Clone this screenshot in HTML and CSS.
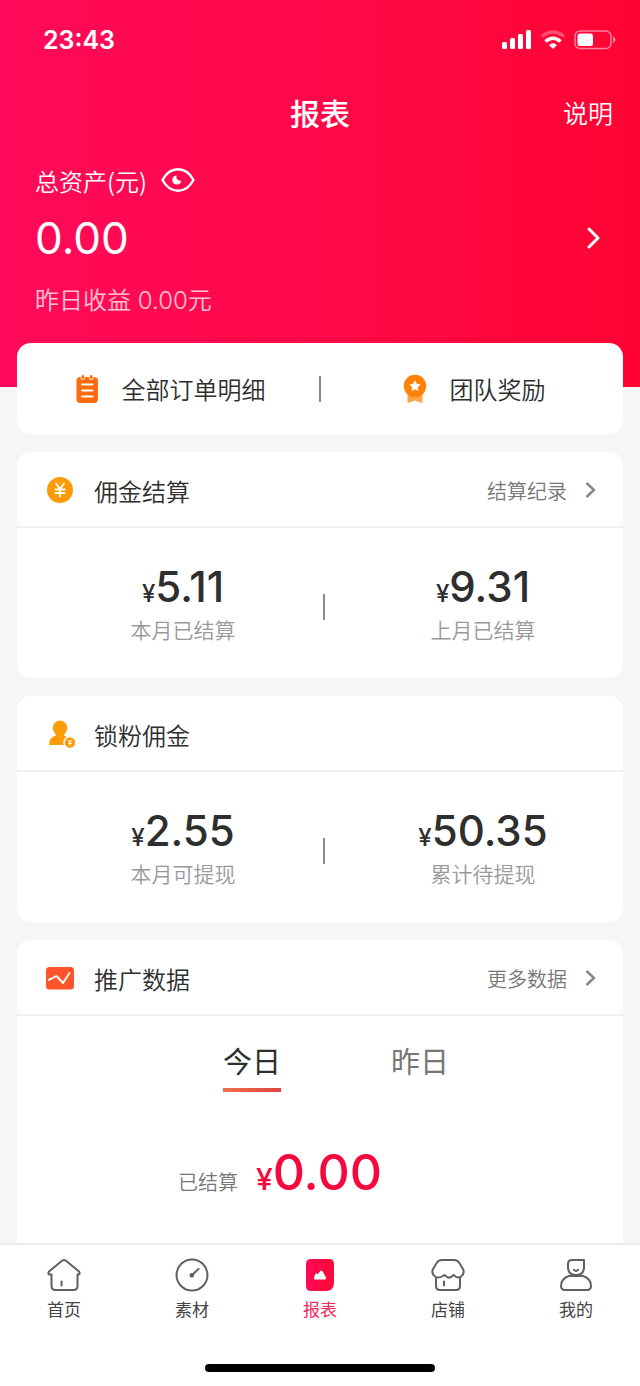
FILE: index.html
```html
<!DOCTYPE html>
<html lang="zh-CN">
<head>
<meta charset="utf-8">
<meta name="viewport" content="width=device-width, initial-scale=1">
<title>报表</title>
<link rel="stylesheet" href="styles.css">
</head>
<body>
<div class="app">
  <header class="hero">
    <div class="status">
      <time class="clock">23:43</time>
      <div class="status-icons">
        <svg width="30" height="20" viewBox="0 0 30 20" fill="#fff" aria-hidden="true"><rect x="0" y="12" width="5" height="7" rx="1.5"/><rect x="8" y="8" width="5" height="11" rx="1.5"/><rect x="16" y="4" width="5" height="15" rx="1.5"/><rect x="24" y="0" width="5" height="19" rx="1.5"/></svg>
        <svg width="24" height="20" viewBox="0 0 24 20" fill="none" stroke="#fff" aria-hidden="true"><path d="M1 6.500Q12-2.500 23 6.500" stroke-width="3.200" opacity=".3"/><path d="M4.500 11.500Q12 5 19.500 11.500" stroke-width="3.600"/><path d="M8 15Q12 11.500 16 15L12 19Z" fill="#fff" stroke="none"/></svg>
        <svg width="42" height="20" viewBox="0 0 42 20" fill="none" aria-hidden="true"><rect x="1" y="1" width="36" height="17.500" rx="5" stroke="#fff" stroke-width="1.500" opacity=".5"/><rect x="3.500" y="3.500" width="15.500" height="12.500" rx="2.500" fill="#fff"/><path d="M39 6.500Q41.500 7.500 41.500 9.700T39 13Z" fill="#fff" opacity=".5"/></svg>
      </div>
    </div>
    <div class="titlebar">
      <h1 class="title">报表</h1>
      <a class="help" href="#help">说明</a>
    </div>
    <div class="assets">
      <div class="assets-label">
        <span>总资产(元)</span>
        <button class="eye" type="button" aria-label="隐藏金额">
          <svg width="34" height="26" viewBox="0 0 34 26" fill="none" aria-hidden="true"><path d="M1.500 13C5 6.500 10 2.300 17 2.300S29 6.500 32.500 13C29 19.500 24 23.700 17 23.700S5 19.500 1.500 13Z" stroke="#fff" stroke-width="2.400" stroke-linejoin="round"/><path d="M15.500 8.500A4.500 4.500 0 1 0 20.300 13.500A4 4 0 0 1 15.500 8.500Z" fill="#fff"/></svg>
        </button>
      </div>
      <a class="assets-total" href="#assets">
        <span>0.00</span>
        <svg width="14" height="22" viewBox="0 0 14 22" fill="none" stroke="#fff" stroke-width="3" stroke-linecap="round" stroke-linejoin="round" aria-hidden="true"><path d="M2 2L11 11L2 20"/></svg>
      </a>
      <p class="assets-note">昨日收益 <span class="latin">0.00</span>元</p>
    </div>
  </header>

  <main class="content">
    <nav class="card quick" aria-label="快捷入口">
      <a class="quick-link" href="#orders">
        <svg width="24" height="30" viewBox="0 0 24 30" aria-hidden="true"><rect x="1.500" y="3" width="21.500" height="26" rx="4" fill="#ff6a0d"/><g fill="#ff6a0d" stroke="#fff" stroke-width="1"><rect x="6" y="0.500" width="3.500" height="5" rx="1.700"/><rect x="14.500" y="0.500" width="3.500" height="5" rx="1.700"/></g><path d="M7 10.500h10.500M7 16.500h10.500M7 22.500h10.500" stroke="#fff" stroke-width="2" stroke-linecap="round"/></svg>
        <span>全部订单明细</span>
      </a>
      <span class="divider"></span>
      <a class="quick-link" href="#rewards">
        <svg width="24" height="30" viewBox="0 0 24 30" aria-hidden="true"><path d="M4.500 18H19.500V29L12 26.500L4.500 29Z" fill="#ffa24a"/><circle cx="12" cy="12" r="11.200" fill="#ff8208"/><path d="M12 6.500l1.800 3.300 3.700.7-2.600 2.700.5 3.700L12 15.300l-3.400 1.600.5-3.700-2.600-2.700 3.700-.7Z" fill="#fff"/></svg>
        <span>团队奖励</span>
      </a>
    </nav>

    <section class="card">
      <div class="card-head">
        <svg class="card-icon" width="30" height="30" viewBox="0 0 30 30" aria-hidden="true"><circle cx="15" cy="15" r="13" fill="#ff9b08"/><path d="M11 8.500L15 14L19 8.500M15 14V21.500M10.500 14.500H19.500M10.500 18H19.500" fill="none" stroke="#fff" stroke-width="1.800" stroke-linecap="round"/></svg>
        <h2 class="card-title">佣金结算</h2>
        <a class="more" href="#records">结算纪录
          <svg width="11" height="16" viewBox="0 0 11 16" fill="none" stroke="#858585" stroke-width="2.400" aria-hidden="true"><path d="M1.500 1L9 8L1.500 15"/></svg>
        </a>
      </div>
      <div class="stats">
        <div class="stat"><p class="amount"><span class="yen">¥</span>5.11</p><p class="stat-label">本月已结算</p></div>
        <span class="divider"></span>
        <div class="stat"><p class="amount"><span class="yen">¥</span>9.31</p><p class="stat-label">上月已结算</p></div>
      </div>
    </section>

    <section class="card">
      <div class="card-head">
        <svg class="card-icon" width="30" height="30" viewBox="0 0 30 30" aria-hidden="true"><g fill="#ff9b08"><ellipse cx="15" cy="9" rx="7.300" ry="7.500"/><path d="M10 13H20L19 16.500Q26 19 26.500 26H4Q4 18 11 16.500Z"/><circle cx="25" cy="23.500" r="6" stroke="#fff" stroke-width="1.500"/></g><path d="M23.200 21L25 23.300L26.800 21M25 23.300V26.500M23.300 24.500H26.700" fill="none" stroke="#fff" stroke-width="1.100"/></svg>
        <h2 class="card-title">锁粉佣金</h2>
      </div>
      <div class="stats">
        <div class="stat"><p class="amount"><span class="yen">¥</span>2.55</p><p class="stat-label">本月可提现</p></div>
        <span class="divider"></span>
        <div class="stat"><p class="amount"><span class="yen">¥</span>50.35</p><p class="stat-label">累计待提现</p></div>
      </div>
    </section>

    <section class="card card-last">
      <div class="card-head">
        <svg class="card-icon" width="30" height="30" viewBox="0 0 30 30" aria-hidden="true"><rect x="1" y="4" width="28" height="22.500" rx="3.500" fill="#ff532b"/><path d="M3.800 16.800L11.500 13L18 20L24.500 10" fill="none" stroke="#fff" stroke-width="1.900" stroke-linecap="round" stroke-linejoin="round"/></svg>
        <h2 class="card-title">推广数据</h2>
        <a class="more" href="#data">更多数据
          <svg width="11" height="16" viewBox="0 0 11 16" fill="none" stroke="#858585" stroke-width="2.400" aria-hidden="true"><path d="M1.500 1L9 8L1.500 15"/></svg>
        </a>
      </div>
      <div class="tabs" role="tablist">
        <button class="tab tab-active" type="button" role="tab" aria-selected="true">今日</button>
        <button class="tab" type="button" role="tab" aria-selected="false">昨日</button>
      </div>
      <p class="settled"><span class="settled-label">已结算</span><span class="settled-amount"><span class="settled-yen">¥</span>0.00</span></p>
    </section>
  </main>

  <footer class="bottom">
    <nav class="tabbar" aria-label="主导航">
      <a class="nav-item" href="#home">
        <svg width="36" height="34" viewBox="0 0 36 34" fill="none" stroke="#606060" stroke-width="2" stroke-linejoin="round" stroke-linecap="round" aria-hidden="true"><path d="M16 2.800Q18 1.300 20 2.800L33 13.500Q34.500 16 32.500 16.500H31.500V28Q31.500 32 27.500 32H9.500Q5.500 32 5.500 28V16.500H3.500Q1.500 16 3 13.500Z"/><path d="M15.500 23.500V27.500"/></svg>
        <span>首页</span>
      </a>
      <a class="nav-item" href="#material">
        <svg width="36" height="34" viewBox="0 0 36 34" fill="none" stroke="#606060" stroke-width="2" stroke-linecap="round" aria-hidden="true"><circle cx="18" cy="17" r="15.500"/><path d="M18 17L24.500 11"/><circle cx="17.800" cy="17.300" r="1.300" fill="#606060"/></svg>
        <span>素材</span>
      </a>
      <a class="nav-item nav-active" href="#report" aria-current="page">
        <svg width="36" height="34" viewBox="0 0 36 34" aria-hidden="true"><defs><linearGradient id="report-fill"><stop offset="0" stop-color="#ff0a58"/><stop offset="1" stop-color="#ff0735"/></linearGradient></defs><path d="M9 1H27Q32 1 32 6V24Q32 33 24 33H9Q4 33 4 28V6Q4 1 9 1Z" fill="url(#report-fill)"/><path d="M13 21.500Q11.500 21.500 12 19.500L13.500 15.800Q14.500 14.500 15.500 16.500L18.500 12.800Q20 11.800 21 14L24 19.500Q24.500 21.500 22.500 21.500Z" fill="#fff"/></svg>
        <span>报表</span>
      </a>
      <a class="nav-item" href="#shop">
        <svg width="36" height="34" viewBox="0 0 36 34" fill="none" stroke="#606060" stroke-width="2" stroke-linejoin="round" stroke-linecap="round" aria-hidden="true"><path d="M12 2H24Q27.500 2 29 4.500L33 11Q35 15.500 31 18.500Q28.500 20.500 25.500 18.500L23.500 17L21 19Q18 20.500 16.500 18.500L14.500 17L12 18.500Q8.500 20.500 5 18.500Q1 15.500 3 11L7 4.500Q8.500 2 12 2Z"/><path d="M6 20V28Q6 32 10 32H26Q30 32 30 28V20M14 23.500V27.500"/></svg>
        <span>店铺</span>
      </a>
      <a class="nav-item" href="#me">
        <svg width="36" height="34" viewBox="0 0 36 34" fill="none" stroke="#606060" stroke-width="2" stroke-linejoin="round" stroke-linecap="round" aria-hidden="true"><path d="M14 2H26V9Q26 17 18 17T10 9V6Q10 2 14 2Z"/><path d="M16 11.800Q18 14 20 11.800M11 18H25Q33 20.500 33 28Q33 32 29 32H7Q3 32 3 28Q3 20.500 11 18Z"/></svg>
        <span>我的</span>
      </a>
    </nav>
    <div class="home-indicator"></div>
  </footer>
</div>
</body>
</html>
```
FILE: styles.css
```css
* {
  box-sizing: border-box;
}

body,
h1,
h2,
p {
  margin: 0;
}

body {
  background: #f6f6f6;
  color: #2e2e2e;
  font-family: "Inter", "Noto Sans CJK SC", sans-serif;
  font-weight: 350;
}

a {
  color: inherit;
  text-decoration: none;
}

button {
  padding: 0;
  border: 0;
  background: none;
  color: inherit;
  font: inherit;
}

svg {
  display: block;
  flex: none;
}

.app {
  display: flex;
  flex-direction: column;
  min-height: 100vh;
}

/* Header */
.hero {
  padding-bottom: 66px;
  background: linear-gradient(90deg, #ff0a5a, #ff0848 50%, #ff0433);
  color: #fff;
}

.status {
  display: flex;
  align-items: center;
  justify-content: space-between;
  height: 79px;
  padding: 0 24px 0 43px;
}

.clock {
  font-size: 25px;
  font-weight: 600;
}

.status-icons {
  display: flex;
  gap: 9px;
}

.titlebar {
  display: grid;
  grid-template-columns: 1fr auto 1fr;
  align-items: center;
  height: 66px;
  padding: 0 27px;
}

.title {
  grid-column: 2;
  font-size: 30px;
  font-weight: 500;
}

.help {
  justify-self: end;
  font-size: 25px;
}

.assets {
  padding: 16px 39px 0 35px;
}

.assets-label {
  display: flex;
  align-items: center;
  gap: 14px;
  height: 38px;
  font-family: "Noto Sans CJK SC", sans-serif;
  font-size: 24px;
}

.assets-total {
  display: flex;
  align-items: center;
  justify-content: space-between;
  height: 78px;
  font-size: 44px;
  font-weight: 400;
}

.assets-note {
  padding-top: 4px;
  font-size: 24px;
  line-height: 40px;
  opacity: 0.75;
}

.latin {
  font-family: "Inter", sans-serif;
  font-weight: 300;
}

/* Cards */
.content {
  display: flex;
  flex: 1;
  flex-direction: column;
  gap: 18px;
  margin-top: -44px;
  padding: 0 17px;
}

.card {
  border-radius: 14px;
  background: #fff;
}

.card-last {
  flex: 1;
  border-radius: 14px 14px 0 0;
}

.divider {
  width: 2px;
  height: 26px;
  background: #8a8a8a;
}

.quick {
  display: grid;
  grid-template-columns: 1fr auto 1fr;
  align-items: center;
  height: 91px;
}

.quick-link {
  display: flex;
  align-items: center;
  justify-content: center;
  gap: 23px;
  padding-left: 4px;
  font-size: 24px;
}

.card-head {
  display: flex;
  align-items: center;
  height: 76px;
  padding: 2px 27px 0 28px;
  border-bottom: 2px solid #f0f0f0;
}

.card-title {
  margin-left: 19px;
  font-size: 24px;
  font-weight: 350;
}

.more {
  display: flex;
  align-items: center;
  gap: 18px;
  margin-left: auto;
  color: #777;
  font-size: 20px;
}

.stats {
  display: grid;
  grid-template-columns: 1fr auto 1fr;
  align-items: center;
  height: 150px;
  padding: 8px 0 0 8px;
}

.stat {
  padding: 0 0 10px 18px;
  text-align: center;
}

.amount {
  font-size: 42px;
  font-weight: 500;
  line-height: 50px;
}

.yen {
  font-size: 24px;
}

.stat-label {
  color: #999;
  font-size: 21px;
  line-height: 24px;
}

/* Promotion data */
.tabs {
  display: flex;
  justify-content: center;
  gap: 110px;
  padding: 22px 0 0 32px;
}

.tab {
  border-bottom: 4px solid transparent;
  color: #777;
  font-size: 29px;
  font-weight: 400;
  line-height: 50px;
}

.tab-active {
  border-image: linear-gradient(90deg, #f0714e, #e0453d) 1;
  color: #2e2e2e;
}

.settled {
  display: flex;
  align-items: baseline;
  justify-content: center;
  gap: 18px;
  padding: 50px 80px 30px 0;
}

.settled-label {
  color: #777;
  font-size: 20px;
}

.settled-amount {
  color: #f5093c;
  font-size: 50px;
  font-weight: 500;
  line-height: 60px;
}

.settled-yen {
  font-size: 30px;
}

/* Bottom navigation */
.bottom {
  padding-bottom: 14px;
  border-top: 2px solid #ececec;
  background: #fff;
}

.tabbar {
  display: grid;
  grid-template-columns: repeat(5, 1fr);
  padding-top: 13px;
}

.nav-item {
  display: flex;
  flex-direction: column;
  align-items: center;
  gap: 6px;
  color: #444;
  font-size: 17px;
  font-weight: 400;
  line-height: 24px;
}

.nav-active {
  color: #f5295a;
}

.home-indicator {
  width: 36%;
  height: 8px;
  margin: 42px auto 0;
  border-radius: 4px;
  background: #000;
}
```
